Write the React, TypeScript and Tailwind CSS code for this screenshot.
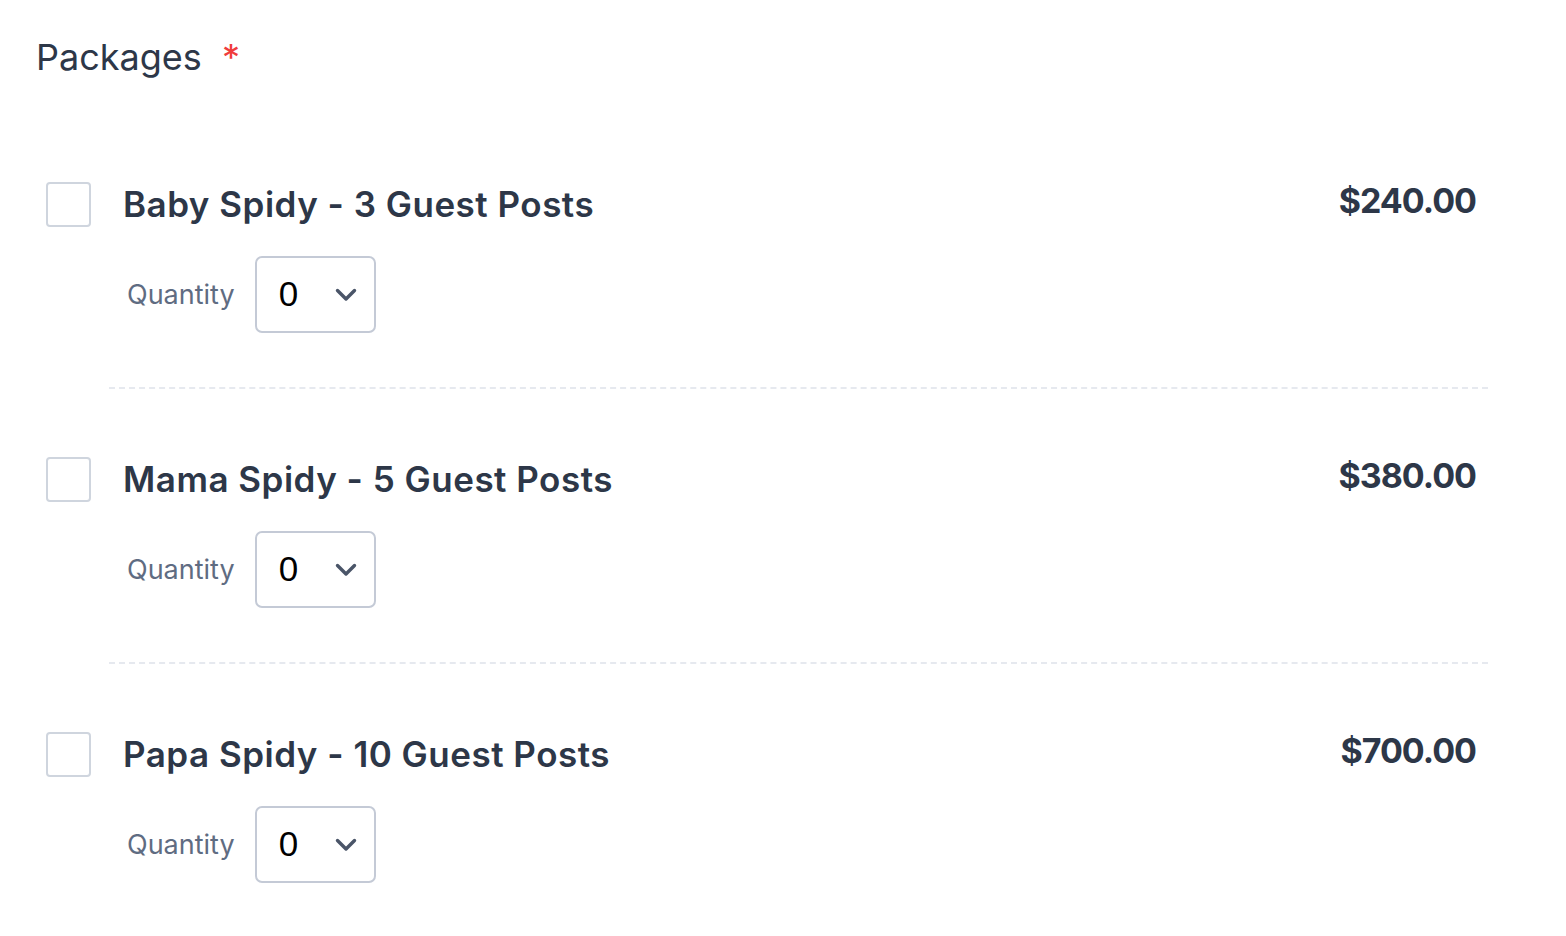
import React from "react";

const packages = [
  { id: 1, name: "Baby Spidy - 3 Guest Posts", price: "$240.00" },
  { id: 2, name: "Mama Spidy - 5 Guest Posts", price: "$380.00" },
  { id: 3, name: "Papa Spidy - 10 Guest Posts", price: "$700.00" },
];

function Chevron() {
  return (
    <svg width="22" height="14" viewBox="0 0 22 14" fill="none">
      <polyline
        points="2.5,2.5 11,11 19.5,2.5"
        stroke="#4a5568"
        strokeWidth="3.4"
        strokeLinecap="round"
        strokeLinejoin="round"
      />
    </svg>
  );
}

function PackageRow({ name, price }: { name: string; price: string }) {
  return (
    <div className="flex items-start">
      <div className="ml-[10px] w-[45px] h-[45px] shrink-0 rounded-[4px] border-2 border-[#cfd5de] bg-white" />
      <div className="ml-[32px] flex-1">
        <div className="flex items-start justify-between">
          <h3 className="text-[35px] leading-[44px] font-semibold tracking-[0.5px] text-[#2d3748]">{name}</h3>
          <span className="mr-[12px] -mt-[3px] text-[34px] leading-[44px] font-bold tracking-[-1px] text-[#2d3748]">{price}</span>
        </div>
        <div className="mt-[30px] flex items-center">
          <span className="ml-[4px] text-[27px] leading-[36px] text-[#5f6c82]">Quantity</span>
          <div className="ml-[20px] w-[121px] h-[77px] rounded-[7px] border-2 border-[#c4cad6] bg-white flex items-center pl-[22px] pr-[17px] justify-between">
            <span className="text-[35px] text-black" style={{ fontFamily: '"Liberation Sans", Arial, sans-serif' }}>
              0
            </span>
            <Chevron />
          </div>
        </div>
      </div>
    </div>
  );
}

export default function App() {
  return (
    <div className="min-h-screen bg-white pl-[36px] pr-[78px] pt-[35px]" style={{ fontFamily: "Inter, 'Noto Sans', sans-serif" }}>
      <h2 className="text-[36px] leading-[44px] text-[#2d3748]">
        Packages <span className="ml-[10px] text-[#f03c3c]">*</span>
      </h2>
      <div className="mt-[103px]">
        {packages.map((p, i) => (
          <div key={p.id}>
            <PackageRow name={p.name} price={p.price} />
            {i < packages.length - 1 && (
              <div className="ml-[73px] mt-[54px] mb-[68px] border-t-2 border-dashed border-[#e6e9ef]" />
            )}
          </div>
        ))}
      </div>
    </div>
  );
}
